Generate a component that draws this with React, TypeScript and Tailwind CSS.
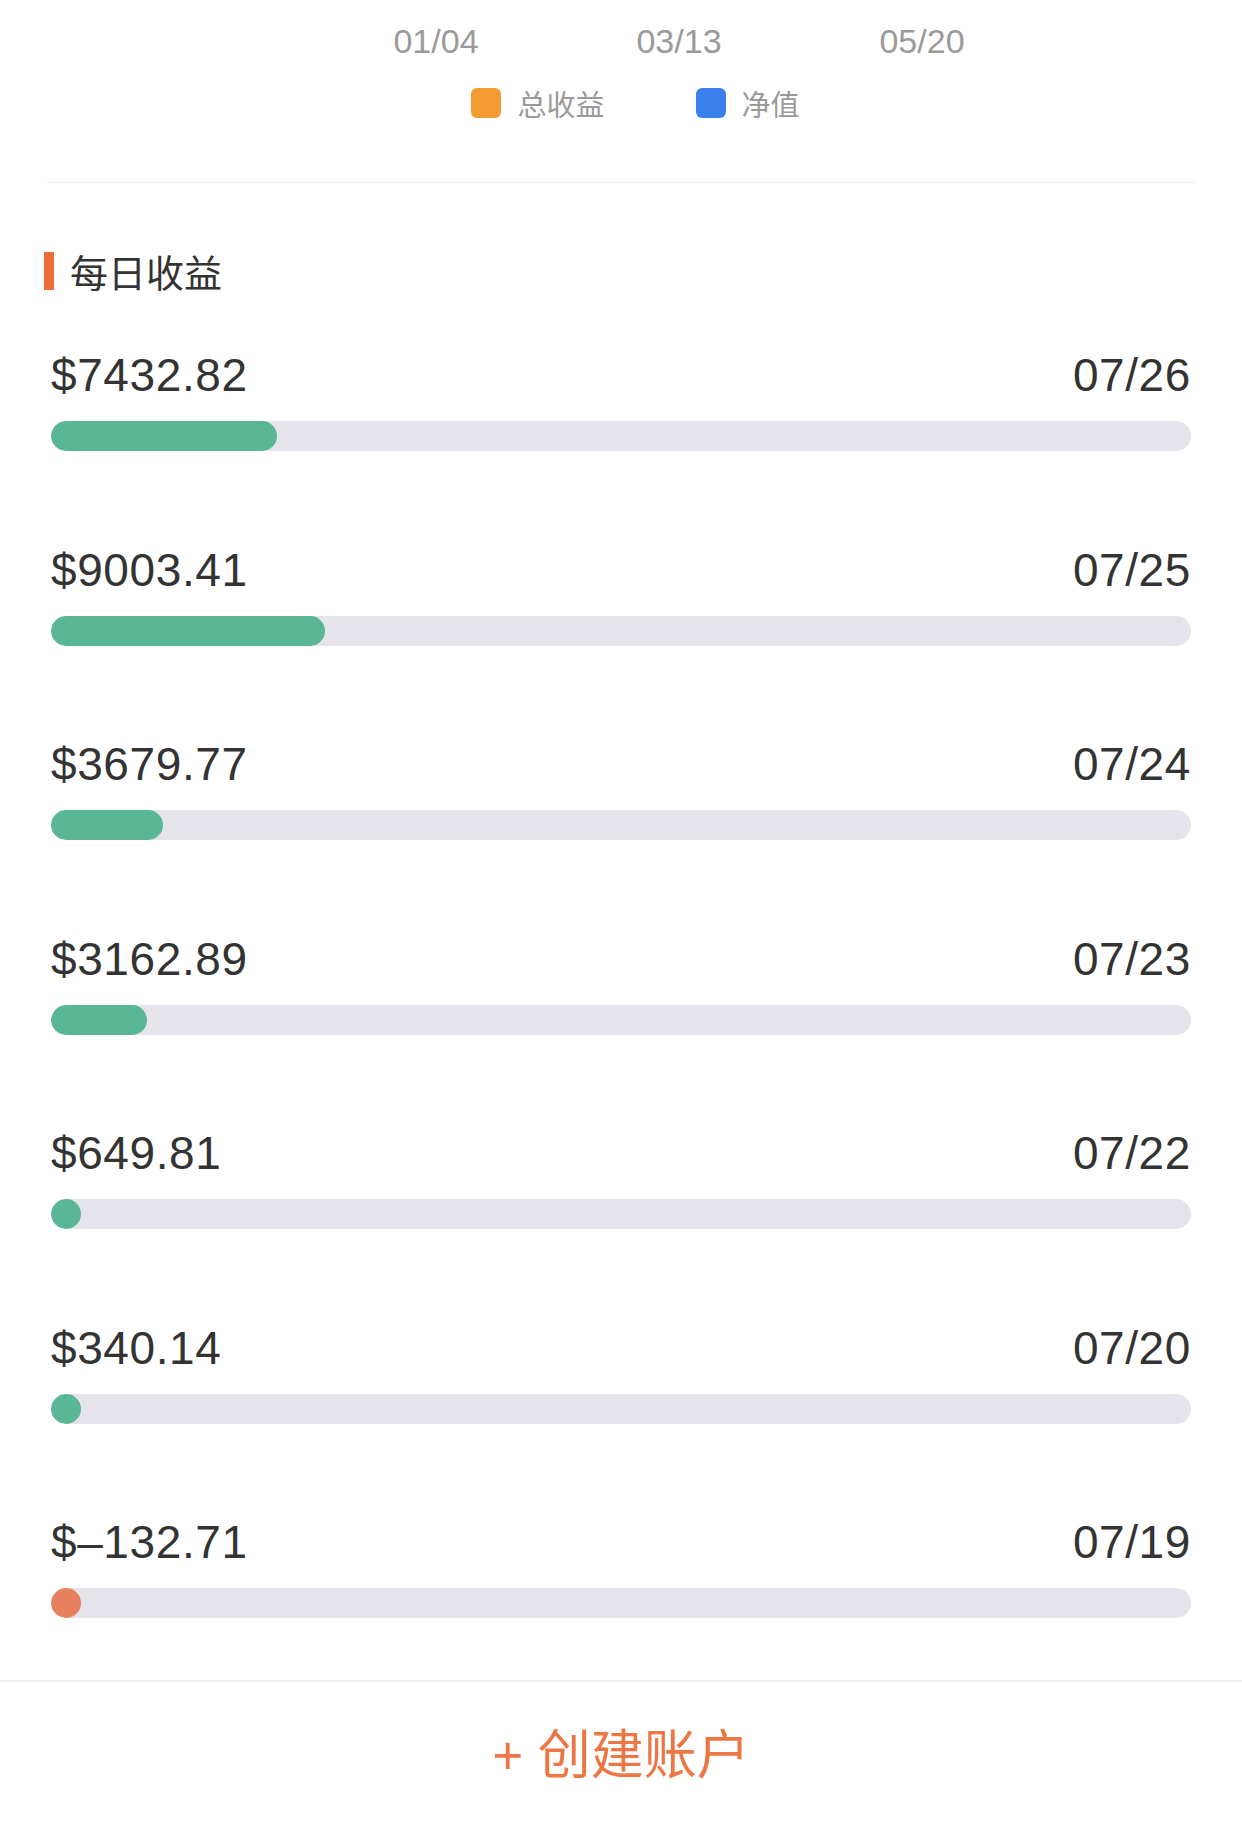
import React from 'react';

type Daily = { amount: number; date: string };

const rows: Daily[] = [
    { amount: 7432.82, date: '07/26' },
    { amount: 9003.41, date: '07/25' },
    { amount: 3679.77, date: '07/24' },
    { amount: 3162.89, date: '07/23' },
    { amount: 649.81, date: '07/22' },
    { amount: 340.14, date: '07/20' },
    { amount: -132.71, date: '07/19' },
];

// full track equals this amount
const SCALE = 37514;

const latin = { fontFamily: '"Liberation Sans", Arial, "Noto Sans CJK SC", sans-serif' };
const cjk = { fontFamily: '"Noto Sans CJK SC", "Liberation Sans", sans-serif' };

const formatAmount = (n: number) => (n < 0 ? `$–${Math.abs(n).toFixed(2)}` : `$${n.toFixed(2)}`);

const DailyRow: React.FC<{ row: Daily }> = ({ row }) => {
    const pct = Math.max(0, row.amount / SCALE) * 100;
    return (
        <div className="flex flex-col">
            <div className="flex justify-between items-center h-[44px] text-[46px] leading-[44px] tracking-[0.6px] text-[#333333]" style={latin}>
                <span>{formatAmount(row.amount)}</span>
                <span>{row.date}</span>
            </div>
            <div className="mt-[24px] h-[30px] w-full rounded-full bg-[#e4e4ea] overflow-hidden">
                <div
                    className={`h-full rounded-full min-w-[30px] ${row.amount < 0 ? 'bg-[#e8805f]' : 'bg-[#59b795]'}`}
                    style={{ width: `${pct}%` }}
                />
            </div>
        </div>
    );
};

export default function App() {
    return (
        <div className="w-[1242px] min-h-[1829px] bg-white flex flex-col">
            {/* chart axis + legend */}
            <div className="pt-[24px] flex justify-center pl-[116px] text-[34px] leading-[34px] text-[#9a9a9a]" style={latin}>
                {['01/04', '03/13', '05/20'].map(d => (
                    <span key={d} className="w-[243px] text-center">{d}</span>
                ))}
            </div>
            <div className="mt-[30px] h-[30px] flex justify-center items-center pl-[29px] gap-[91px]" style={cjk}>
                <div className="flex items-center gap-[16px]">
                    <span className="w-[30px] h-[30px] rounded-[6px] bg-[#f39c33]" />
                    <span className="text-[29px] leading-[30px] text-[#9a9a9a]">总收益</span>
                </div>
                <div className="flex items-center gap-[16px]">
                    <span className="w-[30px] h-[30px] rounded-[6px] bg-[#3a80ec]" />
                    <span className="text-[29px] leading-[30px] text-[#9a9a9a]">净值</span>
                </div>
            </div>
            <div className="mt-[64px] mx-[46px] h-px bg-[#f1f1f1]" />

            {/* daily earnings */}
            <div className="mt-[69px] px-[51px] pb-[62px]">
                <div className="flex items-center h-[38px] -ml-[7px]">
                    <span className="w-[10px] h-[38px] bg-[#ec6d3a]" />
                    <span className="ml-[16px] text-[38px] leading-[38px] text-[#333333]" style={cjk}>每日收益</span>
                </div>
                <div className="mt-[63px] flex flex-col gap-[96.5px]">
                    {rows.map(r => (
                        <DailyRow key={r.date} row={r} />
                    ))}
                </div>
            </div>

            {/* footer */}
            <div className="border-t-2 border-[#f0f0f0] h-[149px] flex items-center justify-center">
                <span className="text-[53px] leading-[53px] text-[#ec7745]" style={latin}>+ 创建账户</span>
            </div>
        </div>
    );
}
